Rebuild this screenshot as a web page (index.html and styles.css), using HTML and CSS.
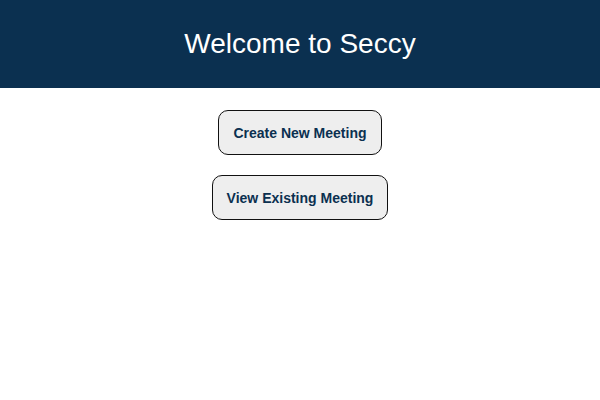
FILE: index.html
```html
<!DOCTYPE html>
<html>
<head>
<meta charset="utf-8">
<link rel="stylesheet" href="styles.css">
</head>
<body>
<header class="top">
  <h1 class="title">Welcome to Seccy</h1>
</header>
<main class="actions">
  <button class="btn">Create New Meeting</button>
  <button class="btn">View Existing Meeting</button>
</main>
</body>
</html>
```

FILE: styles.css
```css
html, body {
  margin: 0;
  padding: 0;
  background: #ffffff;
  font-family: "Liberation Sans", Arial, sans-serif;
}
.top {
  height: 88px;
  background: #0b3050;
  display: flex;
  align-items: center;
  justify-content: center;
}
.title {
  margin: 0;
  color: #ffffff;
  font-size: 28px;
  font-weight: normal;
}
.actions {
  display: flex;
  flex-direction: column;
  align-items: center;
  gap: 20px;
  padding-top: 22px;
}
.btn {
  font-family: "Liberation Sans", Arial, sans-serif;
  font-size: 14px;
  font-weight: bold;
  color: #0b3050;
  background: #eeeeee;
  border: 1.5px solid #111111;
  border-radius: 10px;
  padding: 13.5px 14px;
  line-height: 16px;
}
```
